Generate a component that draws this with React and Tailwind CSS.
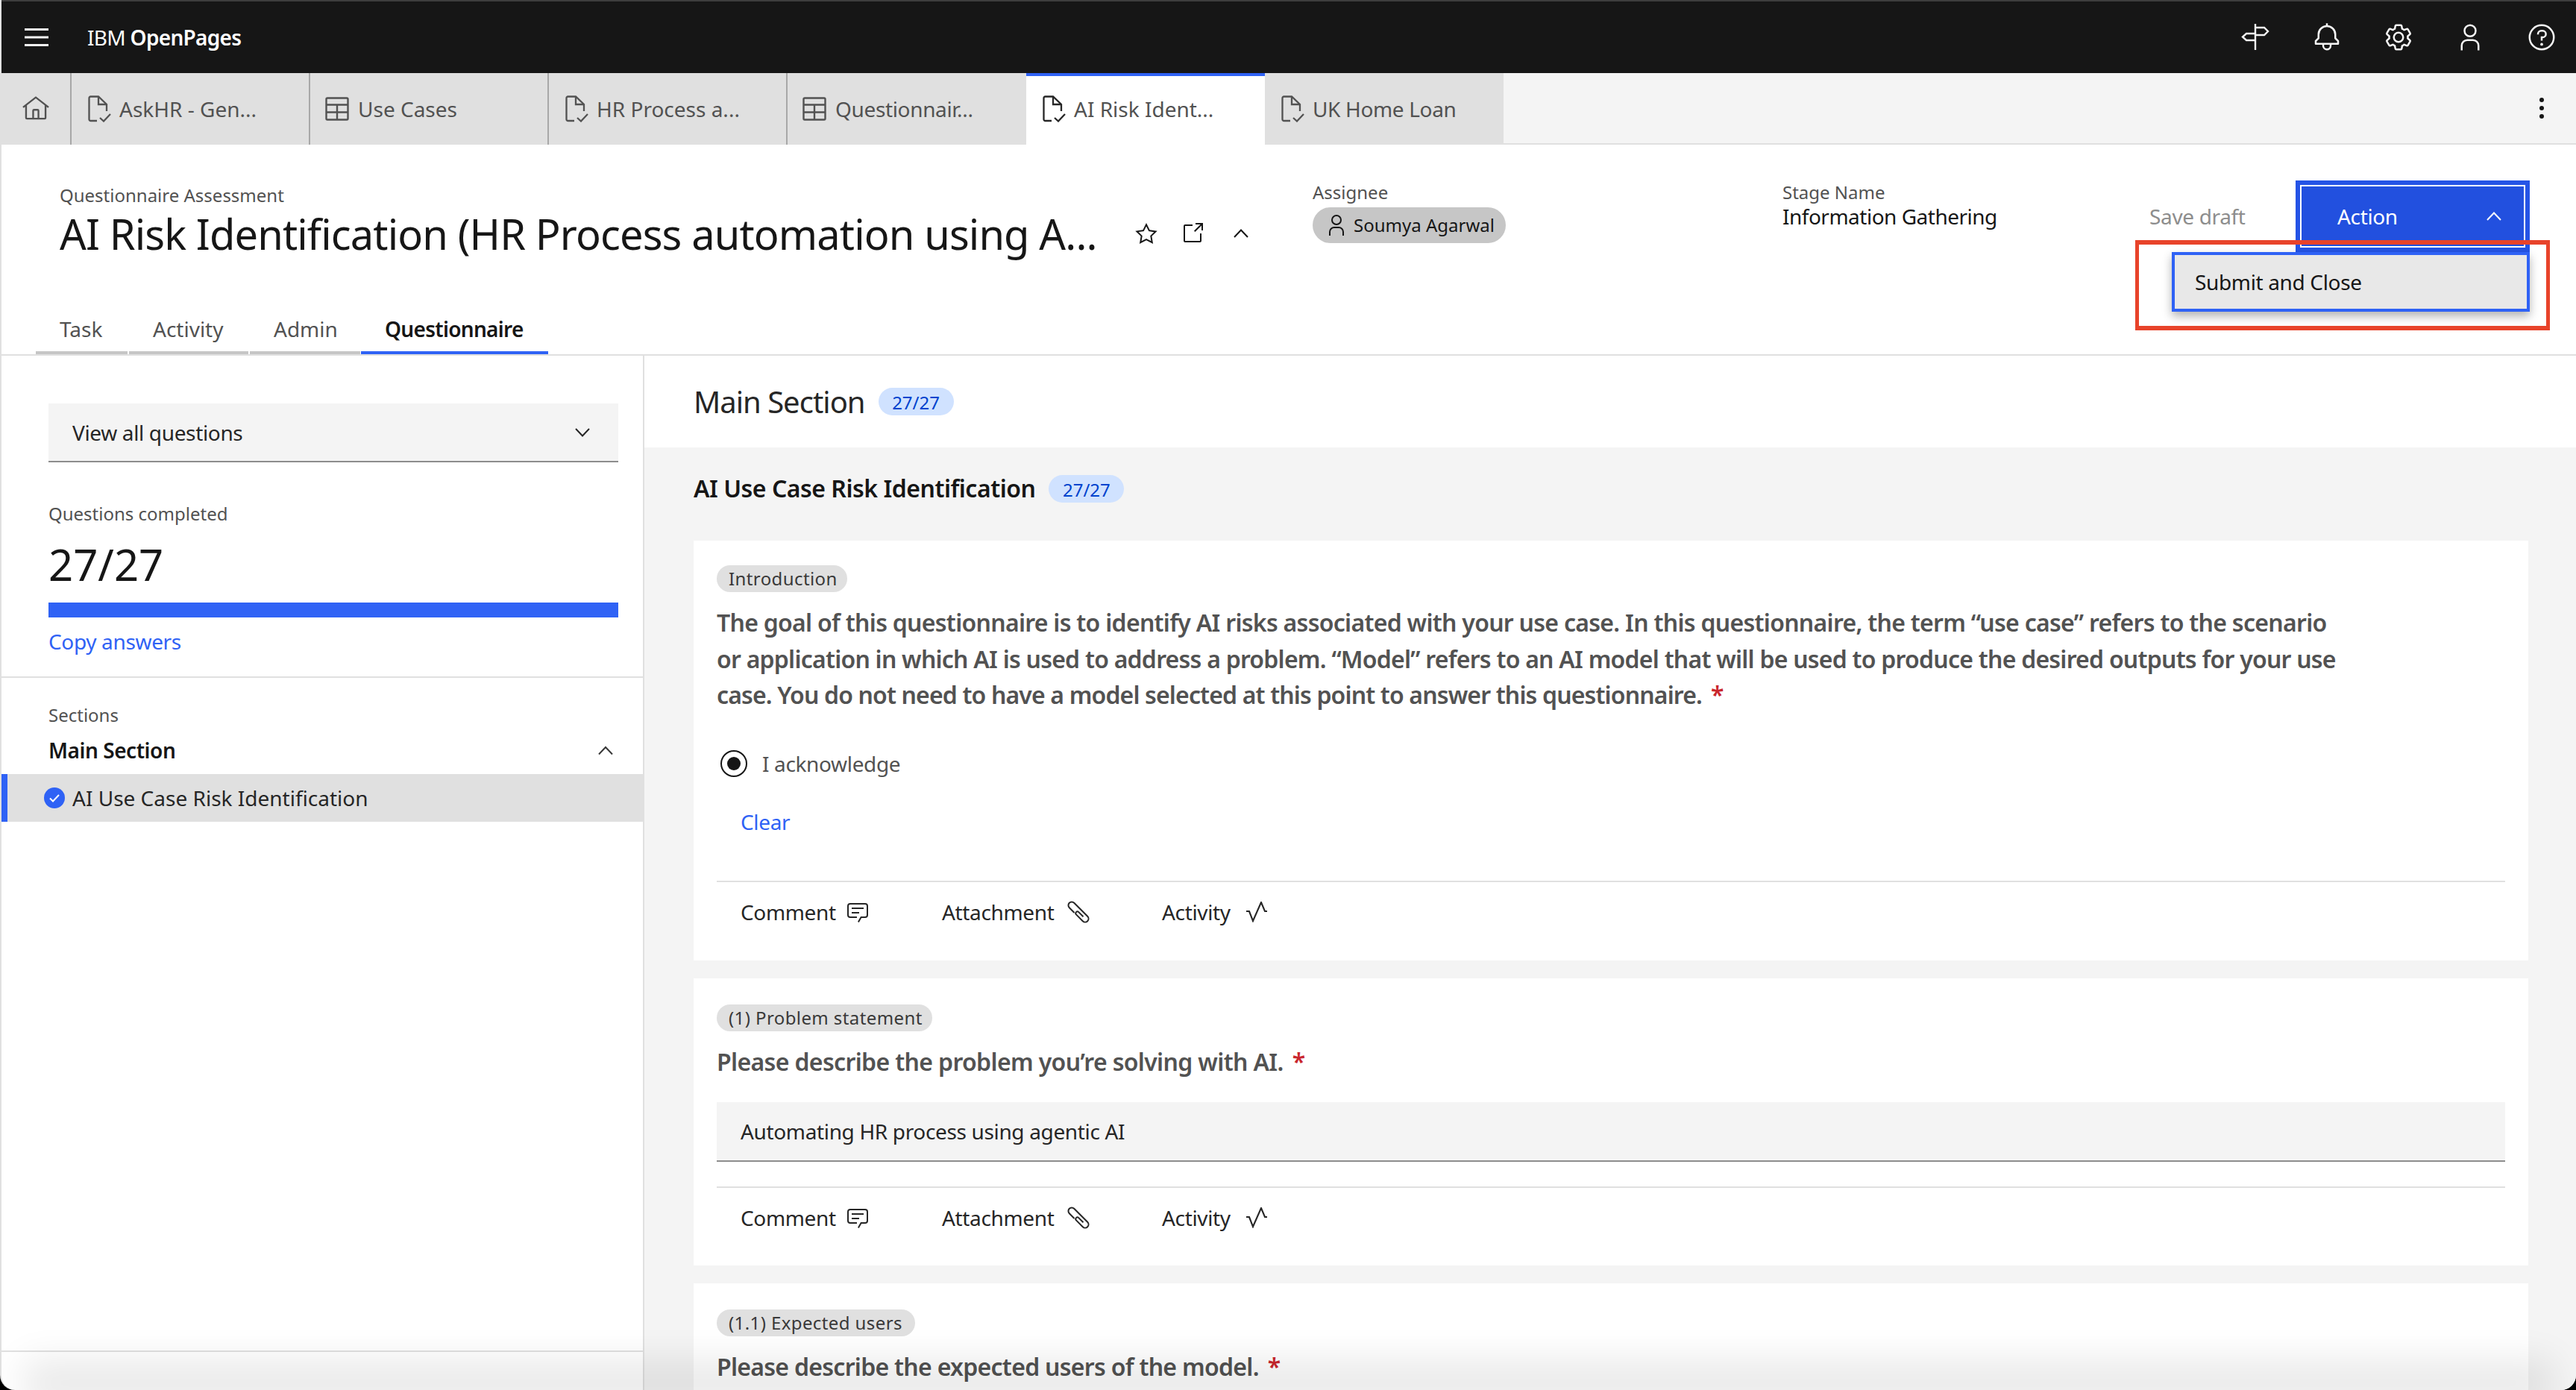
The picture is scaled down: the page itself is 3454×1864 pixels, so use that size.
import React from "react";

const Ic = ({ className = "", children, vb = "0 0 32 32", fill = "currentColor" }) => (
  <svg viewBox={vb} fill={fill} className={"shrink-0 " + className}>{children}</svg>
);
const Chevron = ({ up, className = "" }) => (
  <svg viewBox="0 0 20 12" fill="none" stroke="currentColor" strokeWidth="2" className={"shrink-0 " + className}>
    <path d={up ? "M1 11 10 1.5 19 11" : "M1 1 10 10.5 19 1"} />
  </svg>
);
const Doc = ({ className = "" }) => (
  <svg viewBox="0 0 31 36" fill="none" stroke="currentColor" strokeWidth="2.3" className={"shrink-0 " + className}>
    <path d="M12 34H3.5a2 2 0 0 1-2-2V3.5a2 2 0 0 1 2-2H14L25 12v9" />
    <path d="M14 1.5V12h11" />
    <path d="M16 30l5 4.5 9-9.5" />
  </svg>
);
const TableIc = ({ className = "" }) => (
  <svg viewBox="0 0 32 32" fill="none" stroke="currentColor" strokeWidth="2.4" className={"shrink-0 " + className}>
    <rect x="1.5" y="1.5" width="29" height="29" rx="1.5" />
    <path d="M1.5 10.5h29M1.5 20.5h29M16 10.5v20" />
  </svg>
);
const Home = ({ className = "" }) => (
  <Ic className={className}><path d="M16.6123,2.2138a1.01,1.01,0,0,0-1.2427,0L1,13.4194l1.2427,1.5717L4,13.6209V26a2.0041,2.0041,0,0,0,2,2H26a2.0037,2.0037,0,0,0,2-2V13.63L29.7573,15,31,13.4282ZM18,26H14V18h4Zm2,0V18a2.0023,2.0023,0,0,0-2-2H14a2.002,2.002,0,0,0-2,2v8H6V12.0615l10-7.79,10,7.8005V26Z" /></Ic>
);
const Comment = ({ className = "" }) => (
  <Ic className={className}>
    <path d="M17.74,30,16,29l4-7h6a2,2,0,0,0,2-2V8a2,2,0,0,0-2-2H6A2,2,0,0,0,4,8V20a2,2,0,0,0,2,2h9v2H6a4,4,0,0,1-4-4V8A4,4,0,0,1,6,4H26a4,4,0,0,1,4,4V20a4,4,0,0,1-4,4H21.16Z" />
    <rect x="8" y="10" width="16" height="2" /><rect x="8" y="16" width="10" height="2" />
  </Ic>
);
const Clip = ({ className = "" }) => (
  <svg viewBox="0 0 30 30" fill="none" stroke="currentColor" strokeWidth="2" className={"shrink-0 " + className}>
    <path d="M9.5 16 2.8 9.2A4.5 4.5 0 0 1 9.2 2.8L27.2 20.8A4.5 4.5 0 0 1 20.8 27.2L12 18.4A2.3 2.3 0 0 1 15.3 15.1L21.5 21.3" />
  </svg>
);
const Pulse = ({ className = "" }) => (
  <svg viewBox="0 0 28 28" fill="none" stroke="currentColor" strokeWidth="2.1" className={"shrink-0 " + className}>
    <path d="M0 13h4l5 13L20 1l5 12h3" />
  </svg>
);
const Tab = ({ icon, label, active, border, cut }) => (
  <div className={"w-[320px] h-full flex items-center text-[28px] text-[#525252] " + (icon === "doc" ? "pl-[22px] gap-[11px] " : "pl-[20px] gap-[12px] ") + (active ? "bg-white border-t-4 border-[#2f62f5] pb-[4px]" : "bg-[#e0e0e0]") + (border ? " border-r-2 border-[#a8a8a8]" : "") + (cut ? " tracking-normal" : "")}>
    {icon === "doc" ? <Doc className={"w-[31px] h-[36px] " + (active ? "text-[#262626]" : "text-[#525252]")} /> : <TableIc className="w-[32px] h-[32px] text-[#525252]" />}
    <span>{label}</span>
  </div>
);
const SubTab = ({ w, label, active }) => (
  <div className={"h-[64px] pl-[32px] flex items-center text-[28px] border-b-4 " + w + " " + (active ? "border-[#2f62f5] font-semibold text-[#161616] tracking-[-0.7px]" : "border-[#c6c6c6] text-[#525252] tracking-normal")}>{label}</div>
);
const Tag = ({ children, w }) => (
  <div className={"h-[36px] rounded-full bg-[#e0e0e0] flex items-center pl-[16px] text-[24px] tracking-[0.4px] text-[#393939] " + w}>{children}</div>
);
const Star = () => <span className="text-[#c9262d] ml-[12px] tracking-normal">*</span>;
const Actions = () => (
  <div className="border-t-2 border-[#e0e0e0] pt-[22px] pb-[46px] pl-[32px] flex items-center h-[106px] text-[28px] text-[#262626]">
    <span className="w-[141px]">Comment</span>
    <Comment className="w-[32px] h-[32px]" />
    <span className="ml-[97px] w-[168px]">Attachment</span>
    <Clip className="w-[30px] h-[30px]" />
    <span className="ml-[97px] w-[113px]">Activity</span>
    <Pulse className="w-[28px] h-[28px]" />
  </div>
);
const Badge = ({ className = "" }) => (
  <span className={"w-[101px] h-[37px] pt-[3px] rounded-full bg-[#d0e2ff] text-[#0043ce] text-[24px] tracking-normal font-normal flex items-center justify-center " + className}>27/27</span>
);

export default function App() {
  return (
    <div className="w-[3454px] h-[1864px] bg-black overflow-hidden font-['Noto_Sans',sans-serif] tracking-[-0.35px]">
      <div className="relative w-full h-full rounded-b-[20px] overflow-hidden bg-white flex flex-col border-l-2 border-[#e0e0e0]">
        {/* Top bar */}
        <header className="h-[98px] shrink-0 -ml-[2px] bg-[#161616] border-t-2 border-l-2 border-[#3d3d3d] flex items-center text-white pr-[26px]">
          <svg viewBox="0 0 32 24" className="w-[32px] h-[24px] ml-[31px]" fill="#f4f4f4"><rect width="32" height="3" /><rect y="10.5" width="32" height="3" /><rect y="21" width="32" height="3" /></svg>
          <span className="ml-[52px] text-[28px] tracking-[-0.7px]">IBM <span className="font-semibold">OpenPages</span></span>
          <div className="ml-auto flex items-center gap-[56px] text-[#f4f4f4]">
            <svg viewBox="0 0 40 40" fill="none" stroke="currentColor" strokeWidth="2.4" className="w-[40px] h-[40px]"><path d="M20 2v35M20 7h12l5 5-5 5H20M20 15H8l-5 4.5L8 24h12" /></svg>
            <Ic className="w-[40px] h-[40px]"><path d="M28.7071,19.293,26,16.5859V13a10.0136,10.0136,0,0,0-9-9.9492V1H15V3.0508A10.0136,10.0136,0,0,0,6,13v3.5859L3.2929,19.293A1,1,0,0,0,3,20v3a1,1,0,0,0,1,1h7v.7768a5.152,5.152,0,0,0,4.5,5.1987A5.0057,5.0057,0,0,0,21,25V24h7a1,1,0,0,0,1-1V20A1,1,0,0,0,28.7071,19.293ZM19,25a3,3,0,0,1-6,0V24h6Zm8-3H5V20.4141L7.707,17.707A1,1,0,0,0,8,17V13a8,8,0,0,1,16,0v4a1,1,0,0,0,.293.707L27,20.4141Z" /></Ic>
            <Ic className="w-[40px] h-[40px]"><path d="M27,16.76c0-.25,0-.5,0-.76s0-.51,0-.77l1.92-1.68A2,2,0,0,0,29.3,11L26.94,7a2,2,0,0,0-1.73-1,2,2,0,0,0-.64.1l-2.43.82a11.35,11.35,0,0,0-1.31-.75l-.51-2.52a2,2,0,0,0-2-1.61H13.64a2,2,0,0,0-2,1.61l-.51,2.52a11.48,11.48,0,0,0-1.32.75L7.43,6.06A2,2,0,0,0,6.79,6,2,2,0,0,0,5.06,7L2.7,11a2,2,0,0,0,.41,2.51L5,15.24c0,.25,0,.5,0,.76s0,.51,0,.77L3.11,18.45A2,2,0,0,0,2.7,21L5.06,25a2,2,0,0,0,1.73,1,2,2,0,0,0,.64-.1l2.43-.82a11.35,11.35,0,0,0,1.31.75l.51,2.52a2,2,0,0,0,2,1.61h4.72a2,2,0,0,0,2-1.61l.51-2.52a11.48,11.48,0,0,0,1.32-.75l2.42.82a2,2,0,0,0,.64.1,2,2,0,0,0,1.73-1L29.3,21a2,2,0,0,0-.41-2.51ZM25.21,24l-3.43-1.16a8.86,8.86,0,0,1-2.71,1.57L18.36,28H13.64l-.71-3.55a9.36,9.36,0,0,1-2.7-1.57L6.79,24,4.43,20l2.72-2.4a8.9,8.9,0,0,1,0-3.13L4.43,12,6.79,8l3.43,1.16a8.86,8.86,0,0,1,2.71-1.57L13.64,4h4.72l.71,3.55a9.36,9.36,0,0,1,2.7,1.57L25.21,8,27.57,12l-2.72,2.4a8.9,8.9,0,0,1,0,3.13L27.57,20Z" /><path d="M16,22a6,6,0,1,1,6-6A5.94,5.94,0,0,1,16,22Zm0-10a3.91,3.91,0,0,0-4,4,3.91,3.91,0,0,0,4,4,3.91,3.91,0,0,0,4-4A3.91,3.91,0,0,0,16,12Z" /></Ic>
            <Ic className="w-[40px] h-[40px]"><path d="M16,4a5,5,0,1,1-5,5,5,5,0,0,1,5-5m0-2a7,7,0,1,0,7,7A7,7,0,0,0,16,2Z" /><path d="M26,30H24V25a5,5,0,0,0-5-5H13a5,5,0,0,0-5,5v5H6V25a7,7,0,0,1,7-7h6a7,7,0,0,1,7,7Z" /></Ic>
            <Ic className="w-[40px] h-[40px]"><path d="M16,2A14,14,0,1,0,30,16,14,14,0,0,0,16,2Zm0,26A12,12,0,1,1,28,16,12,12,0,0,1,16,28Z" /><circle cx="16" cy="23.5" r="1.5" /><path d="M17,8H15.5A4.49,4.49,0,0,0,11,12.5V13h2v-.5A2.5,2.5,0,0,1,15.5,10H17a2.5,2.5,0,0,1,0,5H15v4.5h2V17a4.5,4.5,0,0,0,0-9Z" /></Ic>
          </div>
        </header>

        {/* Tab strip */}
        <nav className="h-[96px] shrink-0 bg-[#f4f4f4] border-b-2 border-[#e0e0e0] flex">
          <div className="h-[96px] flex shrink-0">
            <div className="w-[94px] bg-[#e0e0e0] border-r-2 border-[#a8a8a8] flex items-center justify-center text-[#525252]"><Home className="w-[38px] h-[38px]" /></div>
            <Tab icon="doc" label="AskHR - Gen..." border cut />
            <Tab icon="table" label="Use Cases" border cut />
            <Tab icon="doc" label="HR Process a..." border cut />
            <Tab icon="table" label="Questionnair..." />
            <Tab icon="doc" label="AI Risk Ident..." active cut />
            <Tab icon="doc" label="UK Home Loan" />
          </div>
          <div className="ml-auto mr-[43px] self-center flex flex-col gap-[5px]">
            <span className="w-[6px] h-[6px] rounded-full bg-[#161616]" /><span className="w-[6px] h-[6px] rounded-full bg-[#161616]" /><span className="w-[6px] h-[6px] rounded-full bg-[#161616]" />
          </div>
        </nav>

        {/* Page heading */}
        <section className="h-[283px] shrink-0 border-b-2 border-[#e0e0e0] flex flex-col">
          <div className="h-[217px] flex">
            <div className="w-[1758px] shrink-0 pl-[78px] pt-[52px]">
              <div className="text-[24px] leading-[32px] tracking-normal text-[#525252]">Questionnaire Assessment</div>
              <div className="flex items-center mt-[3px] h-[64px]">
                <h1 className="w-[1441px] text-[56px] leading-[64px] tracking-[-0.88px] text-[#161616] whitespace-nowrap">AI Risk Identification (HR Process automation using A...</h1>
                <Ic className="w-[32px] h-[32px] text-[#161616]"><path d="M16,6.52l2.76,5.58.46,1,1,.15,6.16.89L22,18.44l-.75.73.18,1,1.05,6.13-5.51-2.89L16,23l-.93.49L9.56,26.34l1-6.13.18-1L10,18.44,5.58,14.09l6.16-.89,1-.15.46-1L16,6.52M16,2l-4.55,9.22L1.28,12.69l7.36,7.18L6.9,30,16,25.22,25.1,30,23.36,19.87l7.36-7.17L20.55,11.22Z" /></Ic>
                <Ic className="w-[32px] h-[32px] ml-[30px] text-[#161616]"><path d="M26,28H6a2.0027,2.0027,0,0,1-2-2V6A2.0027,2.0027,0,0,1,6,4H16V6H6V26H26V16h2V26A2.0027,2.0027,0,0,1,26,28Z" /><path d="M20 2 20 4 26.586 4 18 12.586 19.414 14 28 5.414 28 12 30 12 30 2 20 2" /></Ic>
                <Chevron up className="w-[20px] h-[12px] ml-[39px] text-[#161616]" />
              </div>
            </div>
            <div className="w-[630px] shrink-0 pt-[48px] tracking-normal">
              <div className="text-[24px] leading-[32px] text-[#525252]">Assignee</div>
              <div className="mt-[4px] w-[259px] h-[48px] rounded-full bg-[#c6c6c6] flex items-center pl-[16px] gap-[7px] text-[24px] text-[#161616]">
                <Ic className="w-[32px] h-[32px]"><path d="M16,4a5,5,0,1,1-5,5,5,5,0,0,1,5-5m0-2a7,7,0,1,0,7,7A7,7,0,0,0,16,2Z" /><path d="M26,30H24V25a5,5,0,0,0-5-5H13a5,5,0,0,0-5,5v5H6V25a7,7,0,0,1,7-7h6a7,7,0,0,1,7,7Z" /></Ic>
                <span>Soumya Agarwal</span>
              </div>
            </div>
            <div className="w-[492px] shrink-0 pt-[48px]">
              <div className="text-[24px] leading-[32px] tracking-normal text-[#525252]">Stage Name</div>
              <div className="text-[28px] leading-[32px] tracking-[-0.5px] text-[#161616]">Information Gathering</div>
            </div>
            <div className="w-[196px] shrink-0 pt-[80px] text-[28px] leading-[32px] text-[#8d8d8d]">Save draft</div>
            <div className="w-[314px] h-[96px] mt-[48px] shrink-0 border-[6px] border-[#2554e6]">
              <div className="w-full h-full border-2 border-white bg-[#2250df] flex items-center pl-[48px] pr-[30px] text-[28px] text-white">
                <span>Action</span>
                <Chevron up className="w-[20px] h-[12px] ml-auto" />
              </div>
            </div>
          </div>
          <div className="flex items-end h-[64px] pl-[46px] -mb-[2px]">
            <SubTab w="w-[123px] mr-[2px]" label="Task" />
            <SubTab w="w-[160px] mr-[2px]" label="Activity" />
            <SubTab w="w-[148px] mr-[1px]" label="Admin" />
            <SubTab w="w-[251px]" label="Questionnaire" active />
          </div>
        </section>

        {/* Body */}
        <div className="flex-1 min-h-0 flex overflow-hidden">
          <aside className="w-[862px] shrink-0 border-r-2 border-[#e0e0e0] flex flex-col">
            <div className="pl-[63px] pr-[33px] pt-[64px]">
              <div className="h-[79px] bg-[#f4f4f4] border-b-2 border-[#8d8d8d] flex items-center pl-[32px] pr-[38px] text-[28px] text-[#262626]">
                <span>View all questions</span>
                <Chevron className="w-[20px] h-[12px] ml-auto" />
              </div>
              <div className="mt-[53px] text-[24px] leading-[32px] tracking-normal text-[#525252]">Questions completed</div>
              <div className="mt-[20px] text-[58px] leading-[64px] tracking-normal text-[#161616]">27/27</div>
              <div className="mt-[19px] h-[20px] bg-[#2f62f5]" />
              <div className="mt-[14px] text-[28px] leading-[36px] text-[#2f62f5]">Copy answers</div>
            </div>
            <div className="mt-[29px] border-t-2 border-[#e0e0e0] pt-[34px]">
              <div className="px-[63px] text-[24px] leading-[32px] tracking-normal text-[#525252]">Sections</div>
              <div className="mt-[11px] h-[40px] pl-[63px] pr-[40px] flex items-center text-[28px] font-semibold tracking-[-0.45px] text-[#161616]">
                <span>Main Section</span>
                <Chevron up className="w-[20px] h-[13px] ml-auto text-[#393939]" />
              </div>
              <div className="mt-[12px] h-[64px] bg-[#e0e0e0] border-l-[8px] border-[#2f62f5] flex items-center pl-[49px] gap-[10px] text-[28px] tracking-normal text-[#262626]">
                <svg viewBox="0 0 28 28" className="w-[28px] h-[28px] shrink-0"><circle cx="14" cy="14" r="14" fill="#2f62f5" /><path d="M8 14.5l4 4 8-8.5" fill="none" stroke="#fff" strokeWidth="2" /></svg>
                <span>AI Use Case Risk Identification</span>
              </div>
            </div>
            <div className="mt-auto h-[53px] border-t-2 border-[#e0e0e0] shrink-0" />
          </aside>

          <main className="flex-1 min-w-0 bg-[#f4f4f4]">
            <div className="h-[123px] bg-white pl-[66px] flex items-center">
              <span className="text-[40px] tracking-[-1px] text-[#262626]">Main Section</span>
              <Badge className="ml-[18px]" />
            </div>
            <div className="h-[125px] pl-[66px] pb-[15px] flex items-center">
              <span className="text-[32px] font-semibold tracking-[-0.5px] text-[#161616]">AI Use Case Risk Identification</span>
              <Badge className="ml-[18px]" />
            </div>
            <div className="ml-[66px] mr-[64px] flex flex-col gap-[24px]">
              <article className="bg-white h-[563px] px-[31px] pt-[33px]">
                <Tag w="w-[175px]">Introduction</Tag>
                <p className="mt-[17px] text-[32px] leading-[48.5px] font-semibold tracking-[-0.72px] text-[#525252] whitespace-nowrap">
                  The goal of this questionnaire is to identify AI risks associated with your use case. In this questionnaire, the term “use case” refers to the scenario<br />
                  <span className="tracking-[-0.77px]">or application in which AI is used to address a problem. “Model” refers to an AI model that will be used to produce the desired outputs for your use</span><br />
                  <span className="tracking-[-0.86px]">case. You do not need to have a model selected at this point to answer this questionnaire.</span><Star />
                </p>
                <div className="mt-[49px] h-[36px] flex items-center text-[28px] text-[#525252]">
                  <span className="ml-[5px] w-[36px] h-[36px] rounded-full border-2 border-[#161616] flex items-center justify-center"><span className="w-[18px] h-[18px] rounded-full bg-[#161616]" /></span>
                  <span className="ml-[20px]">I acknowledge</span>
                </div>
                <div className="mt-[42px] ml-[32px] text-[28px] leading-[36px] text-[#2f62f5]">Clear</div>
                <div className="mt-[61px]"><Actions /></div>
              </article>
              <article className="bg-white h-[385px] px-[31px] pt-[35px]">
                <Tag w="w-[289px]">(1) Problem statement</Tag>
                <p className="mt-[17px] text-[32px] leading-[48px] font-semibold tracking-[-0.65px] text-[#525252]">Please describe the problem you’re solving with AI.<Star /></p>
                <div className="mt-[30px] h-[80px] bg-[#f4f4f4] border-b-2 border-[#8d8d8d] pl-[32px] flex items-center text-[28px] text-[#262626]">Automating HR process using agentic AI</div>
                <div className="mt-[33px]"><Actions /></div>
              </article>
              <article className="bg-white h-[200px] px-[31px] pt-[35px]">
                <Tag w="w-[266px]">(1.1) Expected users</Tag>
                <p className="mt-[17px] text-[32px] leading-[48px] font-semibold tracking-[-0.72px] text-[#525252]">Please describe the expected users of the model.<Star /></p>
              </article>
            </div>
          </main>
        </div>

        {/* Action menu popover */}
        <div className="absolute left-[2910px] top-[338px] w-[480px] h-[80px] bg-[#e8e8e8] border-4 border-[#2f62f5] shadow-[0_6px_12px_rgba(0,0,0,0.3)] flex items-center pl-[27px] text-[28px] text-[#161616]">Submit and Close</div>
        {/* Red annotation */}
        <div className="absolute left-[2861px] top-[322px] w-[556px] h-[121px] border-[5px] border-t-[6px] border-b-[6px] border-[#e8432a]" />
        {/* Bottom window vignette */}
        <div className="absolute left-[60px] right-[60px] -bottom-[1px] h-[1px] shadow-[0_-10px_50px_30px_rgba(0,0,0,0.09)] pointer-events-none" />
      </div>
    </div>
  );
}
